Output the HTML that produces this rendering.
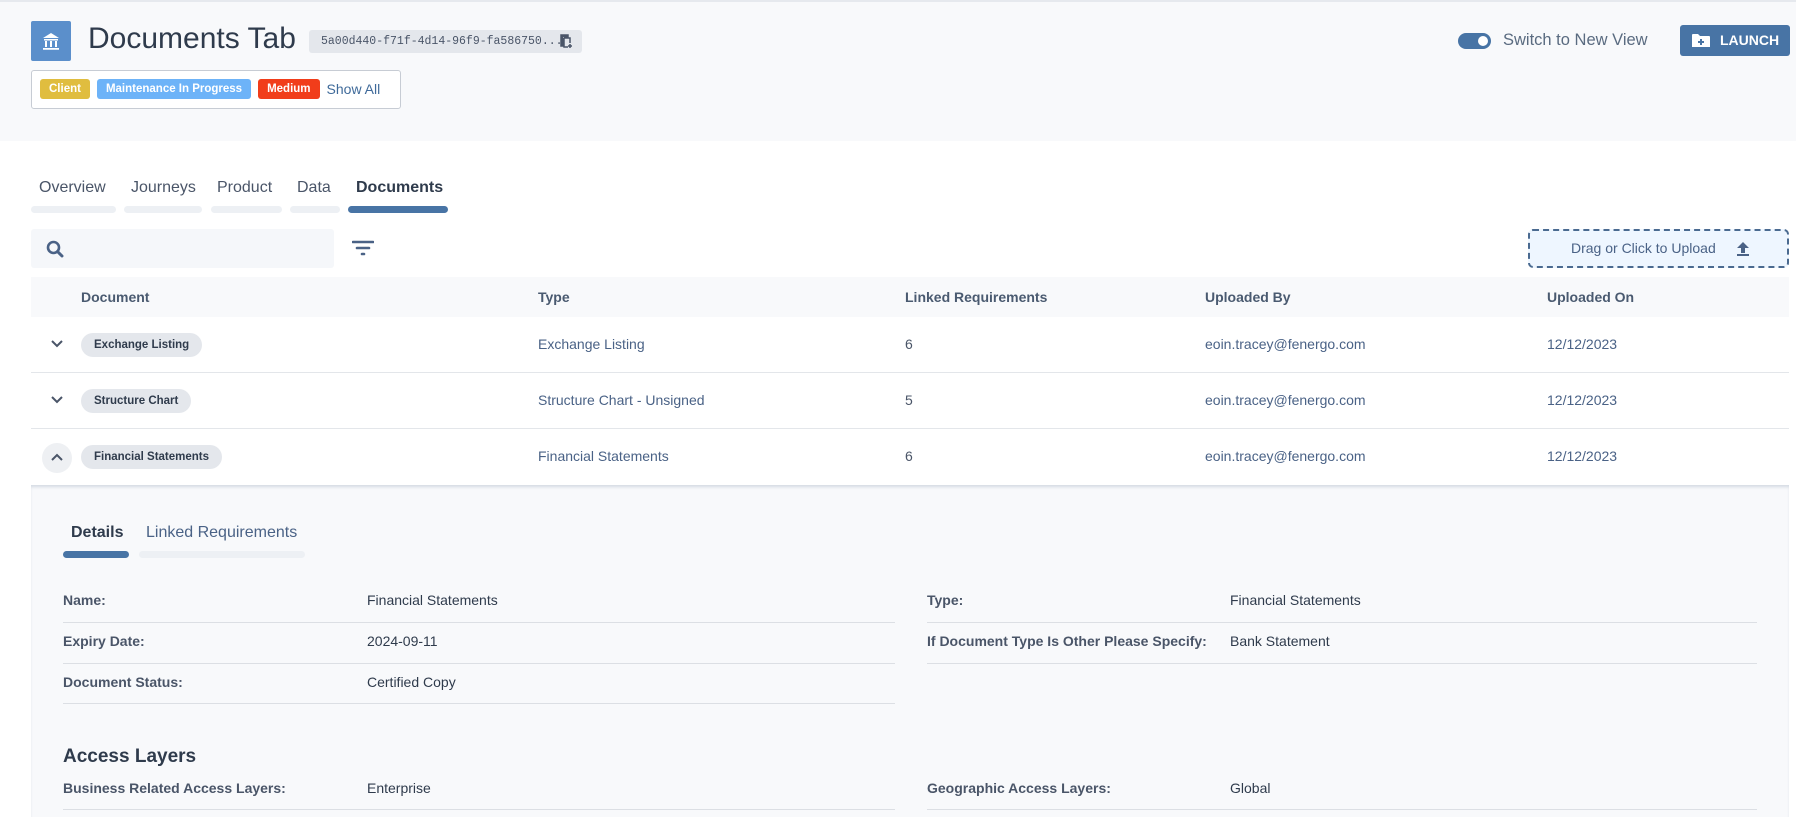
<!DOCTYPE html>
<html><head><meta charset="utf-8"><style>
*{box-sizing:border-box;margin:0;padding:0}
body{width:1796px;height:817px;overflow:hidden;background:#fff;font-family:"Liberation Sans",sans-serif;color:#2f3b4c;position:relative}
.a{position:absolute;white-space:nowrap}
.hdr{left:0;top:0;width:1796px;height:141px;background:#f8f9fb;border-top:2px solid #e6e9ee}
.tag{display:inline-block;height:20px;line-height:20px;padding:0 9px;border-radius:3px;color:#fff;font-size:11.5px;font-weight:bold;margin-right:7px;vertical-align:middle}
.bar{height:7px;border-radius:4px;background:#edf0f4;top:206px}
.th{font-size:14px;font-weight:bold;color:#4a5a70;top:289px}
.row{left:31px;width:1758px;height:56px;border-bottom:1px solid #e3e6ea;background:#fff}
.pill{background:#e4e7ec;border-radius:12px;height:24px;line-height:24px;padding:0 13px;font-size:11.5px;font-weight:bold;color:#2f3b4c}
.td{font-size:14px;color:#4a6286}
.lbl{font-size:14px;font-weight:bold;color:#4a5568}
.val{font-size:14px;color:#2f3b4c}
.ln{height:1px;background:#dcdfe4}
</style></head><body>
<div class="a hdr"></div>
<div class="a" style="left:31px;top:21px;width:40px;height:40px;background:#5b8fcb;border-radius:2px">
<svg width="40" height="40" viewBox="0 0 40 40"><path d="M12 17 L20 12 L28 17 Z M13 18h14v1.5H13z M14 20h2v6h-2z M19 20h2v6h-2z M24 20h2v6h-2z M12 27h16v1.8H12z" fill="#fff"/></svg></div>
<div class="a" style="left:88px;top:22px;font-size:30px;color:#2f3b4c">Documents Tab</div>
<div class="a" style="left:309px;top:30px;width:273px;height:23px;background:#e4e7ec;border-radius:3px;font-family:'Liberation Mono',monospace;font-size:11.5px;color:#4a5568;line-height:23px;padding-left:12px">5a00d440-f71f-4d14-96f9-fa586750...
<svg style="position:absolute;left:249px;top:4px" width="14" height="16" viewBox="0 0 14 16"><path d="M3 1h7v1.5H4.5V12H3z M6 4h6v5M6 4v9h4" fill="none" stroke="#4a5568" stroke-width="1.5"/><path d="M10 12h4M12 10v4" stroke="#4a5568" stroke-width="1.5"/></svg></div>
<div class="a" style="left:31px;top:70px;width:370px;height:39px;border:1px solid #c7ccd4;border-radius:3px;background:#fff;padding:8px 0 0 8px">
<span class="tag" style="background:#e0bd3f">Client</span><span class="tag" style="background:#6db3f8">Maintenance In Progress</span><span class="tag" style="background:#f13d1a">Medium</span><span style="font-size:14px;color:#3f6a9a;vertical-align:middle">Show All</span></div>
<div class="a" style="left:1458px;top:33px;width:33px;height:16px;border-radius:8px;background:#4874a5"><div style="position:absolute;right:3px;top:3px;width:10px;height:10px;border-radius:50%;background:#fff"></div></div>
<div class="a" style="left:1503px;top:31px;font-size:16.5px;color:#5a6b80">Switch to New View</div>
<div class="a" style="left:1680px;top:25px;width:110px;height:31px;background:#4874a5;border-radius:3px;color:#fff;font-size:14px;font-weight:bold;line-height:31px;padding-left:40px">LAUNCH
<svg style="position:absolute;left:12px;top:8px" width="18" height="15" viewBox="0 0 18 15"><path d="M0 2a1 1 0 0 1 1-1h5l2 2h9a1 1 0 0 1 1 1v10H0z" fill="#fff"/><path d="M9 6v6M6 9h6" stroke="#4874a5" stroke-width="2"/></svg></div>

<div class="a" style="left:39px;top:179px;font-size:16px;color:#4a5568">Overview</div>
<div class="a" style="left:131px;top:179px;font-size:16px;color:#4a5568">Journeys</div>
<div class="a" style="left:217px;top:179px;font-size:16px;color:#4a5568">Product</div>
<div class="a" style="left:297px;top:179px;font-size:16px;color:#4a5568">Data</div>
<div class="a" style="left:356px;top:179px;font-size:16px;font-weight:bold;color:#2f3b4c">Documents</div>
<div class="a bar" style="left:31px;width:85px"></div>
<div class="a bar" style="left:124px;width:78px"></div>
<div class="a bar" style="left:211px;width:71px"></div>
<div class="a bar" style="left:290px;width:50px"></div>
<div class="a bar" style="left:348px;width:100px;background:#4874a5"></div>

<div class="a" style="left:31px;top:229px;width:303px;height:39px;background:#f5f7fa;border-radius:3px">
<svg style="position:absolute;left:15px;top:11px" width="18" height="18" viewBox="0 0 18 18"><circle cx="7.5" cy="7.5" r="5.5" fill="none" stroke="#4a6286" stroke-width="2.6"/><path d="M11.5 11.5L16 16" stroke="#4a6286" stroke-width="3" stroke-linecap="round"/></svg></div>
<svg class="a" style="left:352px;top:239px" width="22" height="18" viewBox="0 0 22 18"><path d="M1 3h20M5 9h12M10 15h2" stroke="#4a6286" stroke-width="2.6" stroke-linecap="round"/></svg>
<div class="a" style="left:1528px;top:229px;width:261px;height:39px;border:2px dashed #4a6a90;border-radius:5px;background:#eef6ff;font-size:14px;color:#4a6286;line-height:35px;padding-left:41px">Drag or Click to Upload
<svg style="position:absolute;left:206px;top:10px" width="14" height="15" viewBox="0 0 14 15"><path d="M7 1L1 7h4v5h4V7h4z M1 13h12v2H1z" fill="#4a6286"/></svg></div>

<div class="a" style="left:31px;top:277px;width:1758px;height:40px;background:#f8f9fb"></div>
<div class="a th" style="left:81px">Document</div>
<div class="a th" style="left:538px">Type</div>
<div class="a th" style="left:905px">Linked Requirements</div>
<div class="a th" style="left:1205px">Uploaded By</div>
<div class="a th" style="left:1547px">Uploaded On</div>

<div class="a row" style="top:317px"></div>
<div class="a row" style="top:373px"></div>
<div class="a row" style="top:429px;border-bottom:none"></div>
<svg class="a" style="left:51px;top:340px" width="12" height="8" viewBox="0 0 12 8"><path d="M1 1l5 5 5-5" fill="none" stroke="#4a5568" stroke-width="2"/></svg>
<svg class="a" style="left:51px;top:396px" width="12" height="8" viewBox="0 0 12 8"><path d="M1 1l5 5 5-5" fill="none" stroke="#4a5568" stroke-width="2"/></svg>
<div class="a" style="left:42px;top:443px;width:30px;height:30px;border-radius:50%;background:#eef0f3"></div>
<svg class="a" style="left:51px;top:453px" width="12" height="8" viewBox="0 0 12 8"><path d="M1 7l5-5 5 5" fill="none" stroke="#4a5568" stroke-width="2"/></svg>
<div class="a pill" style="left:81px;top:333px">Exchange Listing</div>
<div class="a pill" style="left:81px;top:389px">Structure Chart</div>
<div class="a pill" style="left:81px;top:445px">Financial Statements</div>
<div class="a td" style="left:538px;top:336px">Exchange Listing</div>
<div class="a td" style="left:538px;top:392px">Structure Chart - Unsigned</div>
<div class="a td" style="left:538px;top:448px">Financial Statements</div>
<div class="a td" style="left:905px;top:336px;color:#4a5568">6</div>
<div class="a td" style="left:905px;top:392px;color:#4a5568">5</div>
<div class="a td" style="left:905px;top:448px;color:#4a5568">6</div>
<div class="a td" style="left:1205px;top:336px">eoin.tracey@fenergo.com</div>
<div class="a td" style="left:1205px;top:392px">eoin.tracey@fenergo.com</div>
<div class="a td" style="left:1205px;top:448px">eoin.tracey@fenergo.com</div>
<div class="a td" style="left:1547px;top:336px">12/12/2023</div>
<div class="a td" style="left:1547px;top:392px">12/12/2023</div>
<div class="a td" style="left:1547px;top:448px">12/12/2023</div>

<div class="a" style="left:31px;top:485px;width:1758px;height:332px;background:#f8f9fb;box-shadow:inset 0 3px 3px -1px #d3d9e2"></div>
<div class="a" style="left:71px;top:524px;font-size:16px;font-weight:bold;color:#2f3b4c">Details</div>
<div class="a" style="left:146px;top:524px;font-size:16px;color:#4a6286">Linked Requirements</div>
<div class="a" style="left:63px;top:551px;width:66px;height:7px;border-radius:4px;background:#4874a5"></div>
<div class="a" style="left:139px;top:551px;width:166px;height:7px;border-radius:4px;background:#edf0f4"></div>

<div class="a lbl" style="left:63px;top:592px">Name:</div><div class="a val" style="left:367px;top:592px">Financial Statements</div>
<div class="a ln" style="left:63px;top:622px;width:832px"></div>
<div class="a lbl" style="left:63px;top:633px">Expiry Date:</div><div class="a val" style="left:367px;top:633px">2024-09-11</div>
<div class="a ln" style="left:63px;top:663px;width:832px"></div>
<div class="a lbl" style="left:63px;top:674px">Document Status:</div><div class="a val" style="left:367px;top:674px">Certified Copy</div>
<div class="a ln" style="left:63px;top:703px;width:832px"></div>

<div class="a lbl" style="left:927px;top:592px">Type:</div><div class="a val" style="left:1230px;top:592px">Financial Statements</div>
<div class="a ln" style="left:927px;top:622px;width:830px"></div>
<div class="a lbl" style="left:927px;top:633px">If Document Type Is Other Please Specify:</div><div class="a val" style="left:1230px;top:633px">Bank Statement</div>
<div class="a ln" style="left:927px;top:663px;width:830px"></div>

<div class="a" style="left:63px;top:746px;font-size:19px;font-weight:bold;color:#2f3b4c">Access Layers</div>
<div class="a lbl" style="left:63px;top:780px">Business Related Access Layers:</div><div class="a val" style="left:367px;top:780px">Enterprise</div>
<div class="a ln" style="left:63px;top:809px;width:832px"></div>
<div class="a lbl" style="left:927px;top:780px">Geographic Access Layers:</div><div class="a val" style="left:1230px;top:780px">Global</div>
<div class="a ln" style="left:927px;top:809px;width:830px"></div>
</body></html>
